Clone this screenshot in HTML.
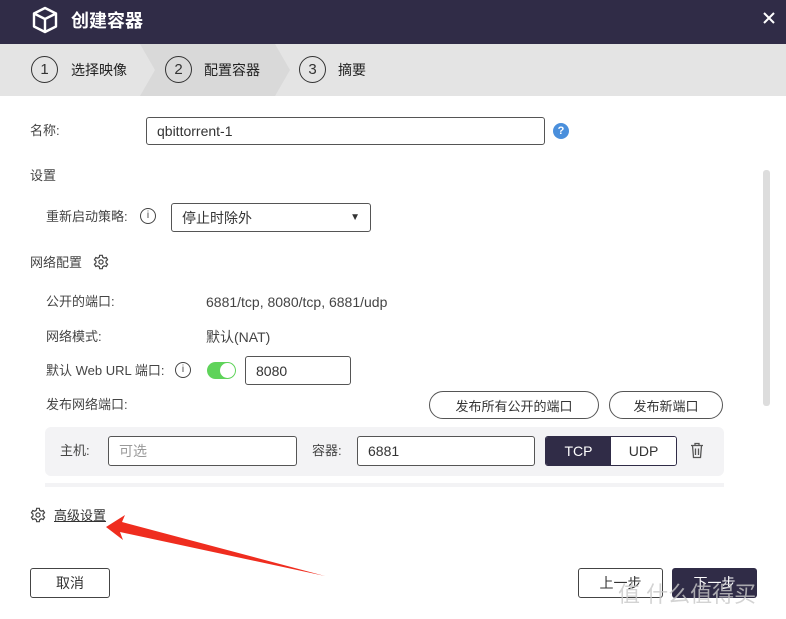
<!DOCTYPE html>
<html><head><meta charset="utf-8"><style>
*{margin:0;padding:0;box-sizing:border-box}
body{width:786px;height:619px;background:#fff;font-family:"Liberation Sans","Noto Sans CJK SC",sans-serif;font-size:13px;color:#444;position:relative;overflow:hidden}
.a{position:absolute}
.t{position:absolute;line-height:16px;white-space:nowrap}
.box{position:absolute;border:1px solid #555;border-radius:3px;background:#fff;padding-left:10px;display:flex;align-items:center;font-size:14px;color:#333}
.pill{position:absolute;border:1px solid #555;border-radius:14px;display:flex;align-items:center;justify-content:center;font-size:13px;color:#333;background:#fff}
.circ{position:absolute;width:27px;height:27px;border:1.5px solid #333;border-radius:50%;display:flex;align-items:center;justify-content:center;font-size:15px;color:#333}
</style></head><body>
<div class="a" style="left:0;top:0;width:786px;height:44px;background:#302c47"></div>
<svg class="a" style="left:30px;top:5px" width="30" height="30" viewBox="0 0 30 30" fill="none" stroke="#fff" stroke-width="2.4" stroke-linejoin="round"><path d="M15 3 L26 8.5 V21.5 L15 27 L4 21.5 V8.5 Z M4 8.5 L15 14 L26 8.5 M15 14 V27"/></svg>
<div class="t" style="left:71px;top:10px;font-size:18px;line-height:22px;color:#fff;font-weight:bold">创建容器</div>
<svg class="a" style="left:763px;top:12px" width="12" height="12" stroke="#fff" stroke-width="2"><path d="M1 1L11 11M11 1L1 11"/></svg>
<div class="a" style="left:0;top:44px;width:786px;height:52px;background:#e4e4e4"></div>
<svg class="a" style="left:0;top:44px" width="786" height="52"><polygon points="140,0 275,0 290,26 275,52 140,52 155,26" fill="#d9d9d9"/></svg>
<div class="circ" style="left:31px;top:56px">1</div><div class="t" style="left:71px;top:62px;font-size:14px;color:#222">选择映像</div>
<div class="circ" style="left:165px;top:56px">2</div><div class="t" style="left:204px;top:62px;font-size:14px;color:#222">配置容器</div>
<div class="circ" style="left:299px;top:56px">3</div><div class="t" style="left:338px;top:62px;font-size:14px;color:#222">摘要</div>
<div class="a" style="left:763px;top:170px;width:7px;height:236px;background:#ddd;border-radius:3px"></div>
<div class="t" style="left:30px;top:123px">名称:</div>
<div class="box" style="left:146px;top:117px;width:399px;height:28px">qbittorrent-1</div>
<div class="a" style="left:553px;top:123px;width:16px;height:16px;border-radius:50%;background:#4a8fdc;color:#fff;font-size:11px;font-weight:bold;text-align:center;line-height:16px">?</div>
<div class="t" style="left:30px;top:168px">设置</div>
<div class="t" style="left:46px;top:209px">重新启动策略:</div>
<div class="a" style="left:140px;top:208px;width:16px;height:16px;border:1.3px solid #444;border-radius:50%;font-size:10px;text-align:center;line-height:13px">i</div>
<div class="box" style="left:171px;top:203px;width:200px;height:29px">停止时除外<span style="position:absolute;right:10px;font-size:10px">▼</span></div>
<div class="t" style="left:30px;top:255px">网络配置</div>
<svg class="a" style="left:93px;top:254px" width="16" height="16" viewBox="0 0 24 24" fill="none" stroke="#444" stroke-width="1.8"><circle cx="12" cy="12" r="3.2"/><path d="M10 2h4l.6 3 2.3 1.3 2.9-1 2 3.4-2.3 2v2.6l2.3 2-2 3.4-2.9-1-2.3 1.3-.6 3h-4l-.6-3-2.3-1.3-2.9 1-2-3.4 2.3-2v-2.6l-2.3-2 2-3.4 2.9 1L9.4 5z"/></svg>
<div class="t" style="left:46px;top:294px">公开的端口:</div><div class="t" style="left:206px;top:294px;font-size:14px">6881/tcp, 8080/tcp, 6881/udp</div>
<div class="t" style="left:46px;top:329px">网络模式:</div><div class="t" style="left:206px;top:329px;font-size:14px">默认(NAT)</div>
<div class="t" style="left:46px;top:363px">默认 Web URL 端口:</div>
<div class="a" style="left:175px;top:362px;width:16px;height:16px;border:1.3px solid #444;border-radius:50%;font-size:10px;text-align:center;line-height:13px">i</div>
<div class="a" style="left:207px;top:362px;width:29px;height:17px;border-radius:9px;background:#5fd35a"></div>
<div class="a" style="left:220px;top:363px;width:15px;height:15px;border-radius:50%;background:#fff"></div>
<div class="box" style="left:245px;top:356px;width:106px;height:29px">8080</div>
<div class="t" style="left:46px;top:397px">发布网络端口:</div>
<div class="pill" style="left:429px;top:391px;width:170px;height:28px">发布所有公开的端口</div>
<div class="pill" style="left:609px;top:391px;width:114px;height:28px">发布新端口</div>
<div class="a" style="left:45px;top:427px;width:679px;height:49px;background:#f3f3f5;border-radius:6px"></div>
<div class="a" style="left:45px;top:483px;width:679px;height:4px;background:#f3f3f5"></div>
<div class="t" style="left:60px;top:443px">主机:</div>
<div class="box" style="left:108px;top:436px;width:189px;height:30px;color:#999">可选</div>
<div class="t" style="left:312px;top:443px">容器:</div>
<div class="box" style="left:357px;top:436px;width:178px;height:30px">6881</div>
<div class="a" style="left:545px;top:436px;width:132px;height:30px;border:1px solid #302c47;border-radius:3px;overflow:hidden;display:flex;font-size:14px">
<div style="width:65px;background:#302c47;color:#fff;display:flex;align-items:center;justify-content:center">TCP</div>
<div style="flex:1;background:#fff;color:#333;display:flex;align-items:center;justify-content:center">UDP</div></div>
<svg class="a" style="left:689px;top:442px" width="16" height="17" viewBox="0 0 16 17" fill="none" stroke="#555" stroke-width="1.3"><path d="M2 3.5H14M6 3.5V1.5H10V3.5M3.5 3.5L4.5 15.5H11.5L12.5 3.5M6.5 6.5V13M9.5 6.5V13"/></svg>
<svg class="a" style="left:30px;top:507px" width="16" height="16" viewBox="0 0 24 24" fill="none" stroke="#444" stroke-width="1.8"><circle cx="12" cy="12" r="3.2"/><path d="M10 2h4l.6 3 2.3 1.3 2.9-1 2 3.4-2.3 2v2.6l2.3 2-2 3.4-2.9-1-2.3 1.3-.6 3h-4l-.6-3-2.3-1.3-2.9 1-2-3.4 2.3-2v-2.6l-2.3-2 2-3.4 2.9 1L9.4 5z"/></svg>
<div class="t" style="left:54px;top:508px;text-decoration:underline;color:#333">高级设置</div>
<svg class="a" style="left:0;top:0" width="786" height="619"><polygon points="106,527 125,515 122,522 325,576 120,532 123,540" fill="#ef2d1f"/></svg>
<div class="a" style="left:30px;top:568px;width:80px;height:30px;border:1px solid #444;border-radius:3px;display:flex;align-items:center;justify-content:center;font-size:14px;color:#333">取消</div>
<div class="a" style="left:578px;top:568px;width:85px;height:30px;border:1px solid #444;border-radius:3px;display:flex;align-items:center;justify-content:center;font-size:14px;color:#333">上一步</div>
<div class="a" style="left:672px;top:568px;width:85px;height:30px;background:#302c47;border-radius:3px;display:flex;align-items:center;justify-content:center;font-size:14px;color:#fff">下一步</div>
<div class="t" style="left:618px;top:582px;font-size:22px;line-height:26px;color:rgba(200,200,200,.8)">值 什么值得买</div>
</body></html>
